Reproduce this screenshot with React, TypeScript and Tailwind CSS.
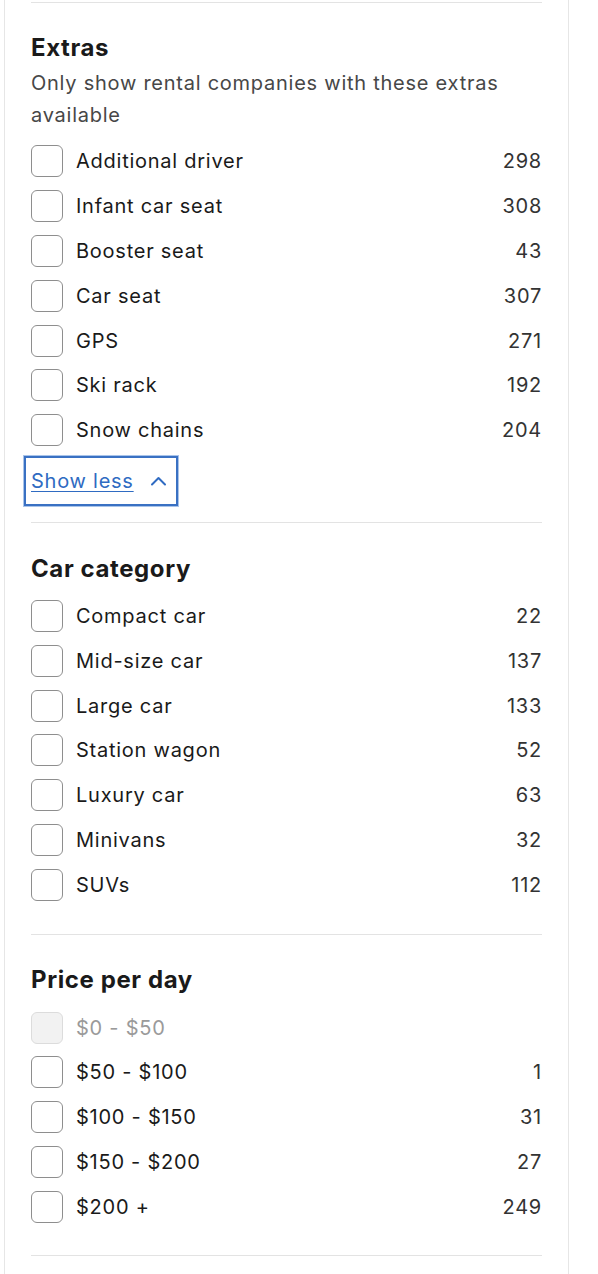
import React from 'react';

type Option = { label: string; count?: number; disabled?: boolean };

const extras: Option[] = [
  { label: 'Additional driver', count: 298 },
  { label: 'Infant car seat', count: 308 },
  { label: 'Booster seat', count: 43 },
  { label: 'Car seat', count: 307 },
  { label: 'GPS', count: 271 },
  { label: 'Ski rack', count: 192 },
  { label: 'Snow chains', count: 204 },
];

const categories: Option[] = [
  { label: 'Compact car', count: 22 },
  { label: 'Mid-size car', count: 137 },
  { label: 'Large car', count: 133 },
  { label: 'Station wagon', count: 52 },
  { label: 'Luxury car', count: 63 },
  { label: 'Minivans', count: 32 },
  { label: 'SUVs', count: 112 },
];

const prices: Option[] = [
  { label: '$0 - $50', disabled: true },
  { label: '$50 - $100', count: 1 },
  { label: '$100 - $150', count: 31 },
  { label: '$150 - $200', count: 27 },
  { label: '$200 +', count: 249 },
];

const CheckRow: React.FC<{ option: Option }> = ({ option }) => (
  <label className="flex h-[44.8px] items-center">
    <span
      className={
        option.disabled
          ? 'h-[32px] w-[32px] shrink-0 rounded-[6px] border border-[#dcdcdc] bg-[#f2f2f2]'
          : 'h-[32px] w-[32px] shrink-0 rounded-[6px] border border-[#8e8e8e] bg-white'
      }
    />
    <span
      className={
        option.disabled
          ? 'ml-[13px] flex-1 text-[20px] leading-[28px] tracking-[0.75px] text-[#9a9a9a]'
          : 'ml-[13px] flex-1 text-[20px] leading-[28px] tracking-[0.75px] text-[#1a1a1a]'
      }
    >
      {option.label}
    </span>
    {option.count !== undefined && (
      <span className="text-[20px] leading-[28px] tracking-[0.75px] text-[#333333]">{option.count}</span>
    )}
  </label>
);

const Heading: React.FC<{ children: React.ReactNode }> = ({ children }) => (
  <h3 className="text-[24px] font-bold leading-[30px] tracking-[0.6px] text-[#1a1a1a]">{children}</h3>
);

const App: React.FC = () => {
  return (
    <div
      className="min-h-[1274px] w-[598px] bg-white"
      style={{ fontFamily: 'Inter, "Noto Sans", sans-serif' }}
    >
      <div className="ml-[4px] min-h-[1274px] w-[565px] border-x border-[#e6e6e6] pl-[26px] pr-[26px]">
        <div className="h-[2px]" />
        <div className="h-px bg-[#e3e3e3]" />

        {/* Extras */}
        <section className="pt-[30px] pb-[16px]">
          <Heading>Extras</Heading>
          <p className="mt-[4px] text-[20px] leading-[32px] tracking-[0.75px] text-[#474747]">
            Only show rental companies with these extras available
          </p>
          <div className="mt-[8px]">
            {extras.map((o) => (
              <CheckRow key={o.label} option={o} />
            ))}
          </div>
          <button className="-ml-[7px] mt-[3px] flex h-[50px] items-center border-2 border-[#3a71c3] pl-[5px] pr-[9px] text-[20px] tracking-[0.75px] text-[#2f6bc2] outline outline-1 outline-[#a9c4ea]">
            <span className="underline decoration-1 underline-offset-[3px]">Show less</span>
            <svg className="ml-[16px]" width="17" height="10" viewBox="0 0 17 10" fill="none">
              <path d="M2 8.5L8.5 2L15 8.5" stroke="#2f6bc2" strokeWidth="2" strokeLinecap="round" strokeLinejoin="round" />
            </svg>
          </button>
        </section>
        <div className="h-px bg-[#e3e3e3]" />

        {/* Car category */}
        <section className="pt-[31px] pb-[27px]">
          <Heading>Car category</Heading>
          <div className="mt-[10px]">
            {categories.map((o) => (
              <CheckRow key={o.label} option={o} />
            ))}
          </div>
        </section>
        <div className="h-px bg-[#e3e3e3]" />

        {/* Price per day */}
        <section className="pt-[30px] pb-[26px]">
          <Heading>Price per day</Heading>
          <div className="mt-[10px]">
            {prices.map((o) => (
              <CheckRow key={o.label} option={o} />
            ))}
          </div>
        </section>
        <div className="h-px bg-[#e3e3e3]" />
      </div>
    </div>
  );
};

export default App;
